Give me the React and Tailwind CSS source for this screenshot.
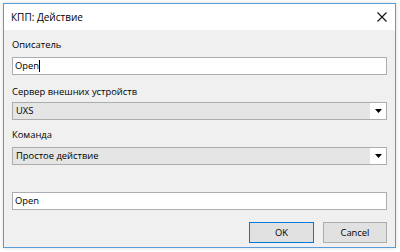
import React from 'react';

// Select box in the Windows 10 combo style: grey field with a white arrow area
const ComboBox = ({ value }) => (
  <div className="flex h-[18px] border border-[#acacac] bg-[#e5e5e5]">
    <div className="flex-1 flex items-center pl-[3px] text-[9.4px] text-black leading-none">{value}</div>
    <div className="w-[16px] bg-white flex items-center justify-center">
      <svg width="7" height="4" viewBox="0 0 7 4">
        <path d="M0 0h7L3.5 4z" fill="#000" />
      </svg>
    </div>
  </div>
);

const TextBox = ({ value, caret }) => (
  <div className="flex items-center h-[18px] border border-[#abadb3] bg-white pl-[2px] text-[9.4px] text-black leading-none">
    <span>{value}</span>
    {caret && <span className="w-px h-[12px] bg-black"></span>}
  </div>
);

const App = () => {
  return (
    <div
      className="w-[400px] h-[252px] bg-white pt-[3px] pl-[3px]"
      style={{ fontFamily: '"Open Sans", "Noto Sans", sans-serif' }}
    >
      <div className="w-[393px] h-[245px] border border-[#5a9bdb] flex flex-col shadow-[0_0_4px_rgba(0,0,0,0.15)]">
        {/* Title bar */}
        <div className="h-[26px] bg-white flex items-center pl-[7px] pr-[8px] shrink-0">
          <span className="flex-1 text-[10px] text-black">КПП: Действие</span>
          <svg width="10" height="10" viewBox="0 0 10 10">
            <path d="M0.5 0.5l9 9M9.5 0.5l-9 9" stroke="#111" strokeWidth="1.1" />
          </svg>
        </div>

        {/* Form */}
        <div className="flex-1 bg-[#f0f0f0] flex flex-col px-[8px] pt-[8px]">
          <div className="h-[14px] text-[9.4px] leading-[14px] text-black">Описатель</div>
          <div className="mt-[5px]">
            <TextBox value="Open" caret />
          </div>

          <div className="mt-[10px] h-[14px] text-[9.4px] leading-[14px] text-black">Сервер внешних устройств</div>
          <div className="mt-[3px]">
            <ComboBox value="UXS" />
          </div>

          <div className="mt-[8px] h-[14px] text-[9.4px] leading-[14px] text-black">Команда</div>
          <div className="mt-[5px]">
            <ComboBox value="Простое действие" />
          </div>

          <div className="mt-[27px]">
            <TextBox value="Open" />
          </div>

          <div className="mt-[12px] flex justify-end gap-[9px]">
            <button className="w-[65px] h-[21px] border border-[#0078d7] bg-[#e1e1e1] text-[9.4px] text-black leading-none">
              OK
            </button>
            <button className="w-[64px] h-[21px] border border-[#adadad] bg-[#e1e1e1] text-[9.4px] text-black leading-none">
              Cancel
            </button>
          </div>
        </div>
      </div>
    </div>
  );
};

export default App;
